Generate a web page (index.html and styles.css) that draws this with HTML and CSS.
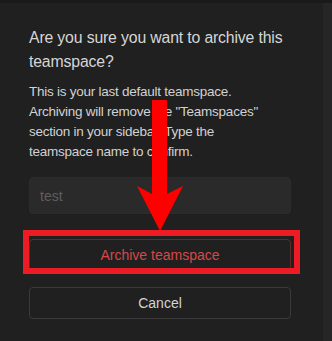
FILE: index.html
```html
<!DOCTYPE html>
<html>
    <head>
        <title>Archive teamspace</title>
        <meta name="viewport" content="width=device-width, initial-scale=1">
        <link rel="stylesheet" href="styles.css">
    </head>
    <body>
        <div id="frame">
            <div id="dialog">
                <h1 id="title">Are you sure you want to archive this teamspace?</h1>
                <p id="message">This is your last default teamspace.<br>Archiving will remove the "Teamspaces"<br>section in your sidebar. Type the<br>teamspace name to confirm.</p>
                <input id="nameInput" type="text" placeholder="test">
                <div id="actions">
                    <span class="button" id="archiveButton">Archive teamspace</span>
                    <span class="button" id="cancelButton">Cancel</span>
                </div>
            </div>
            <div id="edge"></div>
        </div>

        <!-- annotation drawn over the screenshot -->
        <div id="highlight"></div>
        <svg id="arrow" width="332" height="341" viewBox="0 0 332 341">
            <rect x="152" y="100" width="15" height="96" fill="#ff0000"/>
            <polygon points="137,186 152,194 167,194 183,186 160,231" fill="#ff0000"/>
        </svg>
    </body>
</html>
```

FILE: styles.css
```css
* {
    font-family: "Segoe UI", "Liberation Sans", Arial, sans-serif;
    box-sizing: border-box;
}

html, body {
    margin: 0;
    padding: 0;
    background: #202020;
    width: 100%;
    height: 100%;
    overflow: hidden;
}

#frame {
    display: flex;
    flex-direction: row;
    height: 100%;
    border-top: 3px solid #1a1a1a;
}

#dialog {
    width: 323px;
    padding: 23px 30px 0 29px;
    display: flex;
    flex-direction: column;
}

#edge {
    flex: 1;
    background: #262626;
}

#title {
    margin: 0;
    font-size: 15.8px;
    font-weight: 400;
    line-height: 24px;
    letter-spacing: -0.15px;
    color: #d6d6d6;
}

#message {
    margin: 8px 0 0 0;
    font-size: 13.5px;
    line-height: 20px;
    letter-spacing: -0.25px;
    color: #d2d2d2;
    white-space: nowrap;
}

#nameInput {
    margin-top: 15px;
    height: 37px;
    width: 262px;
    padding: 0 10px;
    background: #2a2a2a;
    border: 1px solid #2c2c2c;
    border-radius: 4px;
    font-size: 14px;
    color: #d2d2d2;
    outline: 0;
}

#nameInput::placeholder {
    color: #5e5e5e;
}

#actions {
    margin-top: 25px;
    width: 262px;
    display: flex;
    flex-direction: column;
    gap: 16px;
}

.button {
    display: flex;
    align-items: center;
    justify-content: center;
    height: 32px;
    border-radius: 4px;
    font-size: 14px;
    cursor: pointer;
}

#archiveButton {
    border: 1px solid #5a2e2c;
    color: #d5484a;
}

#cancelButton {
    border: 1px solid #3a3a3a;
    color: #d4d4d4;
}

#highlight {
    position: absolute;
    left: 23px;
    top: 230px;
    width: 277px;
    height: 44px;
    border: 6px solid #ed1c24;
}

#arrow {
    position: absolute;
    left: 0;
    top: 0;
    pointer-events: none;
}
```
